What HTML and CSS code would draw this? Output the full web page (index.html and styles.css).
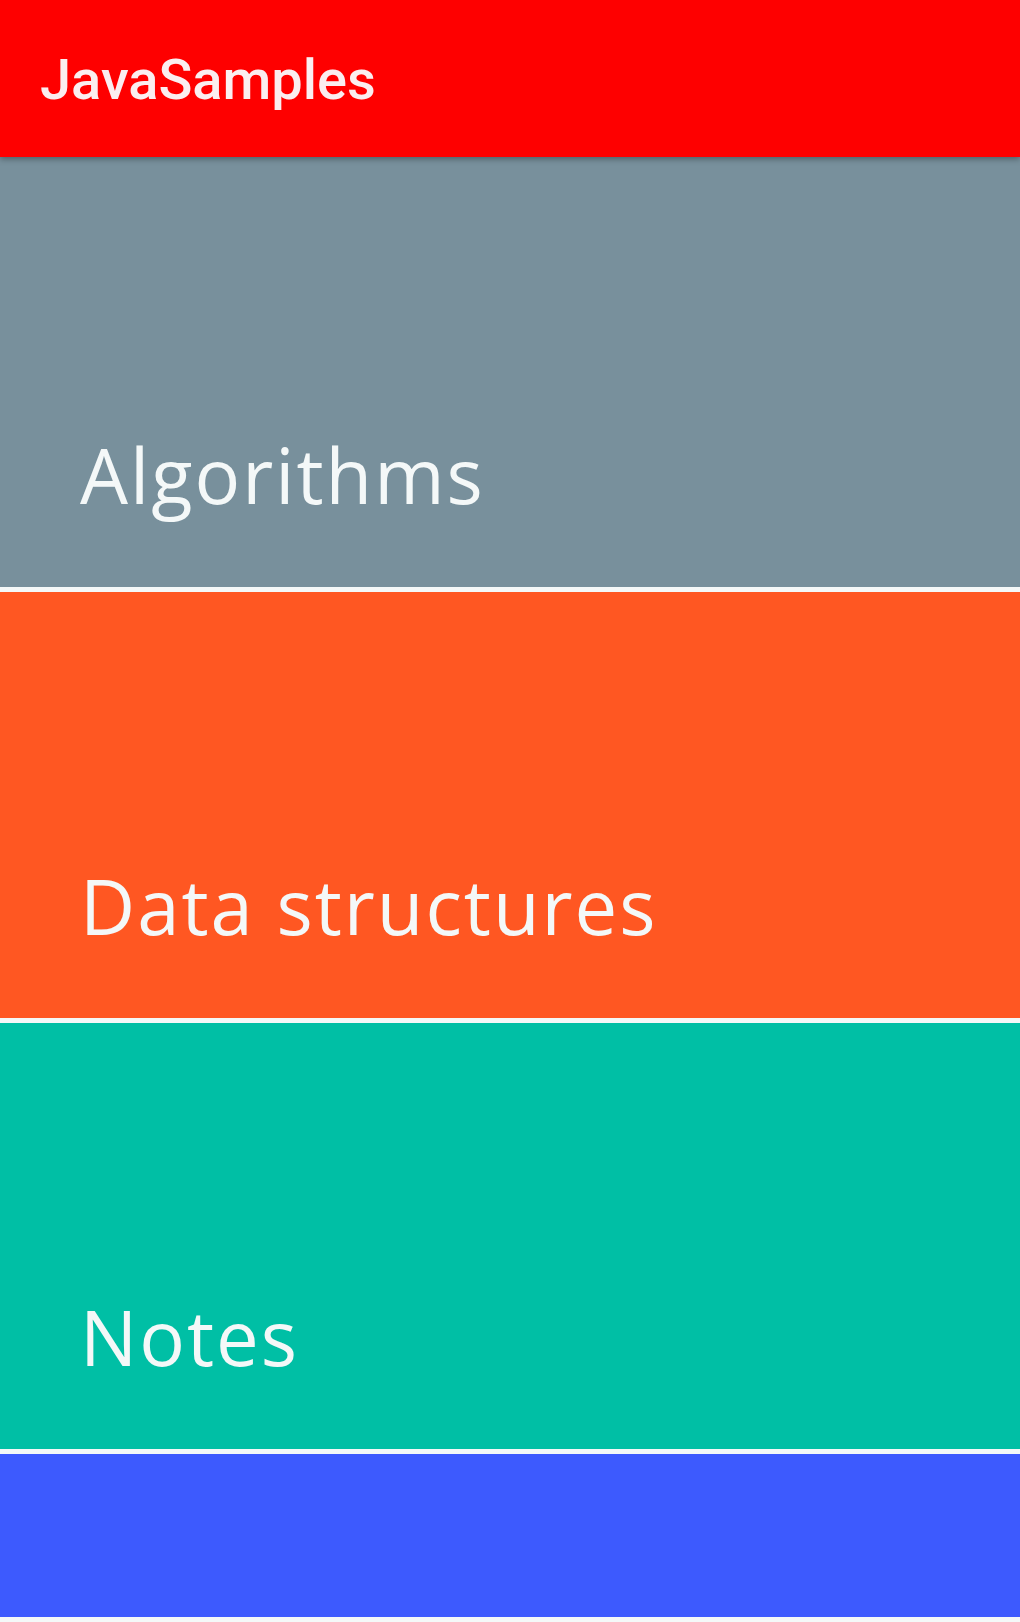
FILE: index.html
```html
<!DOCTYPE html>
<html lang="en">
<head>
    <meta charset="UTF-8">
    <meta name="viewport" content="width=device-width, initial-scale=1.0">
    <title>JavaSamples</title>
    <link rel="stylesheet" href="styles.css">
</head>
<body>
    <header class="toolbar">
        <h1 class="toolbar-title">JavaSamples</h1>
    </header>
    <main class="topic-list">
        <div class="topic topic-grey">
            <span class="topic-name">Algorithms</span>
        </div>
        <div class="topic topic-orange">
            <span class="topic-name">Data structures</span>
        </div>
        <div class="topic topic-teal">
            <span class="topic-name">Notes</span>
        </div>
        <div class="topic topic-blue topic-last"></div>
    </main>
</body>
</html>
```

FILE: styles.css
```css
html, body {
    margin: 0;
    padding: 0;
}

body {
    background-color: #f4f8f8;
    font-family: "Open Sans", "Noto Sans", sans-serif;
    overflow: hidden;
}

.toolbar {
    position: relative;
    z-index: 2;
    height: 157px;
    background-color: #fe0000;
    display: flex;
    align-items: center;
    padding-left: 40px;
    box-shadow: 0 2px 6px rgba(0, 0, 0, 0.35);
}

.toolbar-title {
    margin: 0;
    padding-top: 2px;
    font-family: Roboto, "Liberation Sans", sans-serif;
    font-weight: 500;
    font-size: 56px;
    line-height: 1;
    color: #fbeef0;
}

.topic-list {
    display: flex;
    flex-direction: column;
    gap: 5px;
}

.topic {
    height: 426px;
    box-sizing: border-box;
    display: flex;
    align-items: flex-end;
    padding: 0 0 74px 80px;
}

.topic:first-child {
    height: 430px;
}

.topic-name {
    font-weight: 400;
    font-size: 76px;
    line-height: 1;
    letter-spacing: 2px;
    color: #f4f8f8;
}

.topic-grey {
    background-color: #78909c;
}

.topic-orange {
    background-color: #ff5722;
}

.topic-teal {
    background-color: #00bfa5;
}

.topic-blue {
    background-color: #3d5afe;
}

.topic-last {
    height: 163px;
}
```
